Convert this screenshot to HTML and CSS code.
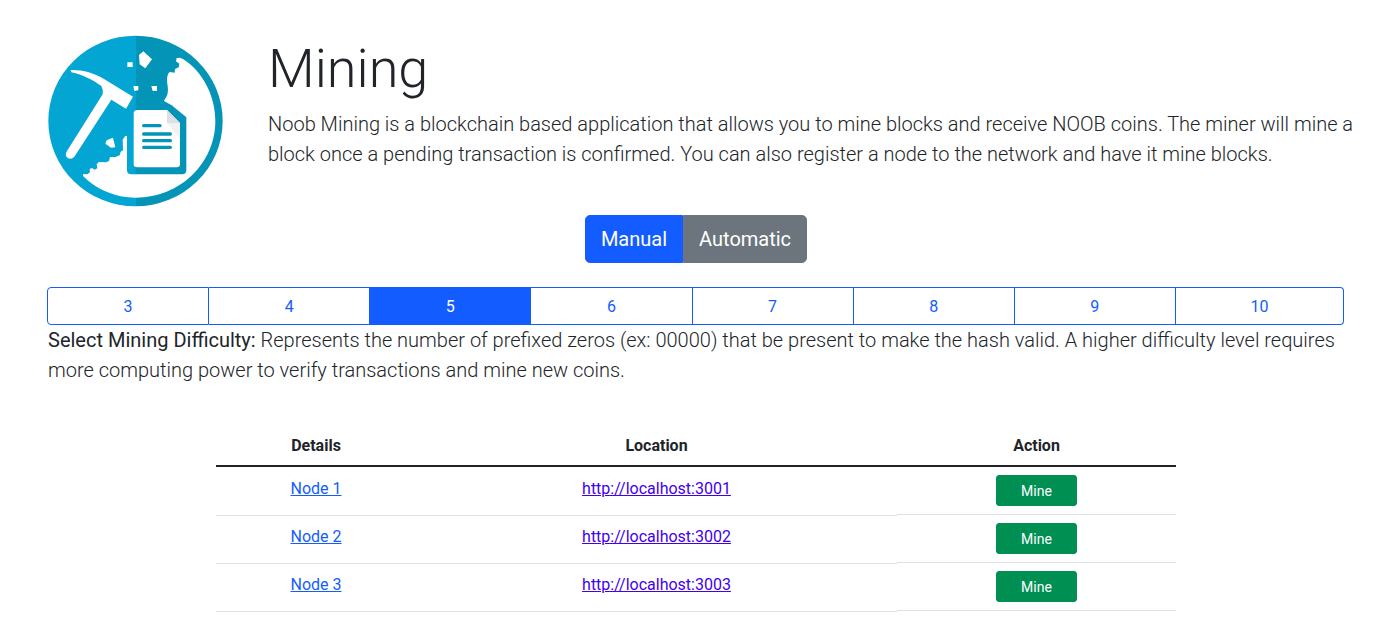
FILE: index.html
```html
<!DOCTYPE html>
<html lang="en">
<head>
<meta charset="utf-8">
<title>Mining</title>
<link rel="stylesheet" href="styles.css">
</head>
<body>
<main class="page">
  <header class="intro">
    <svg class="logo" viewBox="24 15 525 516" role="img" aria-label="Noob Mining">
      <defs>
        <clipPath id="disc"><ellipse cx="286.500" cy="273" rx="261.500" ry="256"/></clipPath>
      </defs>
      <g clip-path="url(#disc)">
        <rect x="24" y="15" width="264" height="516" fill="#03a5d3"/>
        <rect x="288" y="15" width="262" height="516" fill="#0494b7"/>
      </g>
      <path fill="#fff" d="M410 84L420 83L430 88C490 126 526 200 526 273C526 400 420 503 287 503C225 503 168 478 129 438L130 432L142 433L150 427L149 417L156 414L164 419L172 415L170 402L177 396L198 397L207 393L210 381L224 382L239 376L242 365L249 361L248 329L255 319L261 317L300 260L372 213L375 207C383 197 386 184 382 161C380 145 382 132 389 126L404 128L405 117L416 112L418 101L408 94Z"/>
      <path fill="#03a5d3" d="M255 200H288V433H274Q261 433 261 420V317Z"/>
      <path fill="#0494b7" d="M287 213H372L395 226L439 262V420Q439 433 426 433H287Z"/>
      <path fill="#fff" d="M292 240H381L420 279V402Q420 412 410 412H292Q281 412 281 402V251Q281 240 292 240Z"/>
      <path fill="#dedfe3" d="M381 240L420 279H381Z"/>
      <path fill="#f1f1f4" d="M381 279H420V326Z"/>
      <g stroke="#0494b7" stroke-width="10" stroke-linecap="round">
        <path d="M311 287H360M311 312H391M311 332H391M311 352H391"/>
      </g>
      <path fill="#fff" d="M92 120C126 119 164 129 192 147L279 200L258 236L214 209L106 376C101 386 91 389 83 384C76 379 76 371 81 363L188 193Q190 178 184 168C158 150 128 134 94 127Z"/>
      <path fill="#fff" d="M310 64L336 88L316 115L299 103L297 75ZM262 97H278V111H262ZM280 168H295V181L283 183ZM334 168H351V183H338ZM219 323L226 352L213 353L196 341L200 331Z"/>
    </svg>
    <div>
      <h1 class="title">Mining</h1>
      <p class="lead">Noob Mining is a blockchain based application that allows you to mine blocks and receive NOOB coins. The miner will mine a block once a pending transaction is confirmed. You can also register a node to the network and have it mine blocks.</p>
    </div>
  </header>

  <div class="modes" role="group" aria-label="Mining mode">
    <button class="mode mode-active" type="button">Manual</button>
    <button class="mode" type="button">Automatic</button>
  </div>

  <div class="levels" role="group" aria-label="Mining difficulty">
    <button class="level" type="button">3</button>
    <button class="level" type="button">4</button>
    <button class="level level-active" type="button">5</button>
    <button class="level" type="button">6</button>
    <button class="level" type="button">7</button>
    <button class="level" type="button">8</button>
    <button class="level" type="button">9</button>
    <button class="level" type="button">10</button>
  </div>
  <p class="lead"><strong class="label">Select Mining Difficulty:</strong> Represents the number of prefixed zeros (ex: 00000) that be present to make the hash valid. A higher difficulty level requires more computing power to verify transactions and mine new coins.</p>

  <table class="nodes">
    <thead>
      <tr><th class="col-details" scope="col">Details</th><th class="col-location" scope="col">Location</th><th scope="col">Action</th></tr>
    </thead>
    <tbody>
      <tr><td><a class="link" href="#node1">Node 1</a></td><td><a class="link link-visited" href="http://localhost:3001">http://localhost:3001</a></td><td class="action"><button class="mine" type="button">Mine</button></td></tr>
      <tr><td><a class="link" href="#node2">Node 2</a></td><td><a class="link link-visited" href="http://localhost:3002">http://localhost:3002</a></td><td class="action"><button class="mine" type="button">Mine</button></td></tr>
      <tr><td><a class="link" href="#node3">Node 3</a></td><td><a class="link link-visited" href="http://localhost:3003">http://localhost:3003</a></td><td class="action"><button class="mine" type="button">Mine</button></td></tr>
    </tbody>
  </table>
</main>
</body>
</html>
```
FILE: styles.css
```css
* { box-sizing: border-box; }

body {
  margin: 0;
  background: #fff;
  color: #212529;
  font-family: Roboto, "Liberation Sans", sans-serif;
  font-size: 16px;
  line-height: 24px;
}

button { font: inherit; cursor: pointer; }

.page { padding: 35px 51px 16px 48px; }

.intro {
  display: grid;
  grid-template-columns: 175px 1fr;
  column-gap: 45px;
  margin-right: -12px;
}

.logo { display: block; width: 100%; }

.title {
  margin: 0 0 6px;
  font-size: 54px;
  font-weight: 300;
  line-height: 68px;
}

.lead {
  margin: 0;
  font-size: 20px;
  font-weight: 300;
  line-height: 30px;
}

.label { font-weight: 400; }

.modes {
  display: flex;
  justify-content: center;
  margin: 8px 0 24px;
}

.mode {
  padding: 8px 15px;
  border: 1px solid #6c757d;
  border-radius: 0 5px 5px 0;
  background: #6c757d;
  color: #fff;
  font-size: 20px;
  line-height: 30px;
}

.mode-active {
  border-color: #135cff;
  border-radius: 5px 0 0 5px;
  background: #135cff;
}

.levels { display: flex; margin: 0 0 0 -1px; }

.level {
  flex: 1 1 auto;
  padding: 7px 12px 5px;
  border: 1px solid #135cff;
  border-left-width: 0;
  background: #fff;
  color: #135cff;
}

.level:first-child { border-left-width: 1px; border-radius: 4px 0 0 4px; }
.level:last-child { padding-right: 11px; padding-left: 11px; border-radius: 0 4px 4px 0; }
.level-active { background: #135cff; color: #fff; }

.nodes {
  width: 960px;
  max-width: 100%;
  margin: 40px auto 0;
  border-spacing: 0;
  table-layout: fixed;
  text-align: center;
}

.nodes th {
  padding: 9px 8px 7px;
  border-bottom: 2px solid #212529;
  font-weight: 700;
}

.nodes td {
  padding: 10px 8px 8px;
  border-bottom: 1px solid transparent;
  box-shadow: 0 1px 0 #dee2e6;
  vertical-align: top;
}

.nodes .action {
  padding-top: 8px;
  border-bottom-color: #dee2e6;
  box-shadow: none;
}

.col-details { width: 200px; }
.col-location { width: 481px; }

.link { color: #135cff; text-decoration: underline; }
.link-visited { color: #4300ee; }

.mine {
  display: block;
  margin: 0 auto;
  padding: 5px 24px 3px;
  border: 1px solid #008f53;
  border-radius: 3px;
  background: #008f53;
  color: #fff;
  font-size: 14px;
  line-height: 21px;
}
```
